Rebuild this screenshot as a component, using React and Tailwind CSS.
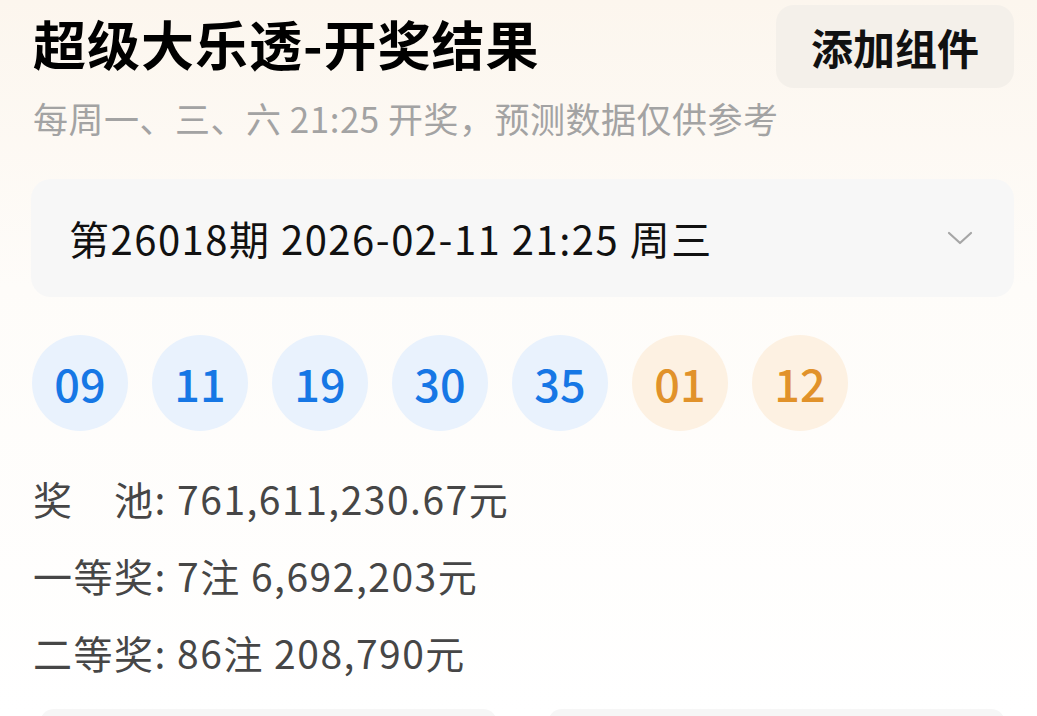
const font = { fontFamily: '"Noto Sans CJK SC", "Noto Sans", sans-serif' };

const reds = ["09", "11", "19", "30", "35"];
const blues = ["01", "12"];

const rows = [
  { label: "奖　池", value: "761,611,230.67元" },
  { label: "一等奖", value: "7注 6,692,203元" },
  { label: "二等奖", value: "86注 208,790元" },
];

const Ball = ({ n, tone }) => (
  <div
    className={`w-[96px] h-[96px] rounded-full flex items-center justify-center text-[45px] font-medium ${
      tone === "blue"
        ? "bg-[#e9f2fd] text-[#1677e5]"
        : "bg-[#fdf1e2] text-[#e1922a]"
    }`}
  >
    {n}
  </div>
);

export default function App() {
  return (
    <div
      className="w-[1037px] h-[716px] overflow-hidden bg-gradient-to-b from-[#fcf6ee] via-[#fefcf9] via-40% to-white"
      style={font}
    >
      <div className="pl-[31px] pr-[23px]">
        {/* header */}
        <div className="flex items-start justify-between pt-[5px]">
          <h1 className="text-[53px] font-bold text-black leading-none tracking-[1px] mt-[12px] ml-[2px]">
            超级大乐透-开奖结果
          </h1>
          <button className="w-[238px] h-[83px] rounded-[18px] bg-[#f4f0ea] text-[42px] font-bold text-[#111]">
            添加组件
          </button>
        </div>

        <p className="mt-[10px] ml-[2px] text-[35px] leading-[40px] tracking-[0.5px] text-[#a3a3a3]">
          每周一、三、六 21:25 开奖，预测数据仅供参考
        </p>

        {/* period selector */}
        <div className="mt-[41px] h-[118px] rounded-[20px] bg-[#f7f7f7] flex items-center justify-between pl-[38px] pr-[41px]">
          <span className="text-[40px] tracking-[1.5px] text-[#111]">
            第26018期 2026-02-11 21:25 周三
          </span>
          <svg width="26" height="16" viewBox="0 0 26 16" fill="none">
            <path
              d="M2 3 L13 13 L24 3"
              stroke="#a6a6a6"
              strokeWidth="2.2"
              strokeLinecap="round"
              strokeLinejoin="round"
            />
          </svg>
        </div>

        {/* balls */}
        <div className="mt-[38px] flex gap-[24px] ml-[1px]">
          {reds.map((n) => (
            <Ball key={"r" + n} n={n} tone="blue" />
          ))}
          {blues.map((n) => (
            <Ball key={"b" + n} n={n} tone="orange" />
          ))}
        </div>

        {/* prize info */}
        <div className="mt-[40px] ml-[2px] flex flex-col gap-[23px]">
          {rows.map((r) => (
            <div key={r.label} className="text-[39px] leading-[54px] tracking-[1.5px] text-[#464646]">
              {r.label}: {r.value}
            </div>
          ))}
        </div>
      </div>

      {/* next cards peeking */}
      <div className="mt-[30px] grid grid-cols-2 gap-[51px] pl-[40px] pr-[32px]">
        <div className="h-[60px] rounded-t-[14px] bg-[#f6f6f6]" />
        <div className="h-[60px] rounded-t-[14px] bg-[#f6f6f6]" />
      </div>
    </div>
  );
}
